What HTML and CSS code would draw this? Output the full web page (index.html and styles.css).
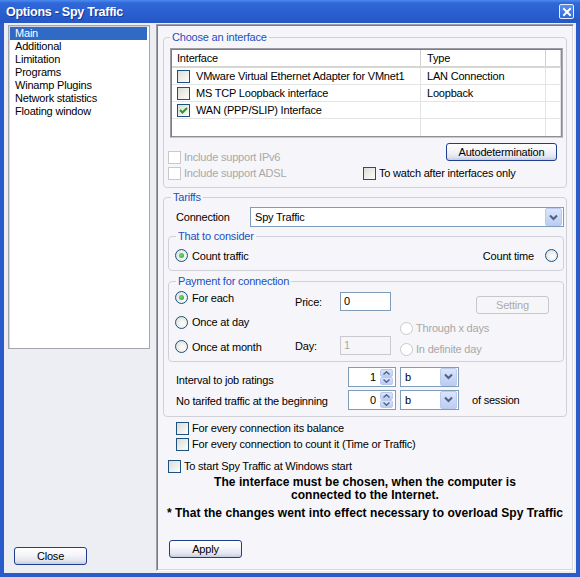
FILE: index.html
```html
<!DOCTYPE html>
<html>
<head>
<meta charset="utf-8">
<title>Options - Spy Traffic</title>
<link rel="stylesheet" href="styles.css">
</head>
<body>
<div class="window">
  <div class="titlebar">
    <span class="title">Options - Spy Traffic</span>
    <span class="close-x"><svg width="12" height="12" viewBox="0 0 12 12"><path d="M3 3 L9 9 M9 3 L3 9" stroke="#fff" stroke-width="2" stroke-linecap="square"/></svg></span>
  </div>
  <div class="client">
    <div class="sidebar">
      <ul class="listbox">
        <li class="sel">Main</li>
        <li>Additional</li>
        <li>Limitation</li>
        <li>Programs</li>
        <li>Winamp Plugins</li>
        <li>Network statistics</li>
        <li>Floating window</li>
      </ul>
      <button class="btn btn-close">Close</button>
    </div>
    <div class="panel">
      <fieldset class="group g-iface">
        <legend>Choose an interface</legend>
        <div class="listview">
          <div class="lv-row lv-head"><div class="c1">Interface</div><div class="c2">Type</div><div class="c3"></div></div>
          <div class="lv-row"><div class="c1"><span class="cb"></span>VMware Virtual Ethernet Adapter for VMnet1</div><div class="c2">LAN Connection</div><div class="c3"></div></div>
          <div class="lv-row"><div class="c1"><span class="cb"></span>MS TCP Loopback interface</div><div class="c2">Loopback</div><div class="c3"></div></div>
          <div class="lv-row"><div class="c1"><span class="cb checked"><svg width="11" height="11" viewBox="0 0 11 11"><path d="M2 5 L4.5 7.5 L9 3" fill="none" stroke="#21A121" stroke-width="2"/></svg></span>WAN (PPP/SLIP) Interface</div><div class="c2"></div><div class="c3"></div></div>
          <div class="lv-row lv-last"><div class="c1"></div><div class="c2"></div><div class="c3"></div></div>
        </div>
        <div class="iface-opts">
          <div class="opts-left">
            <div class="chk disabled"><span class="cb"></span>Include support IPv6</div>
            <div class="chk disabled"><span class="cb"></span>Include support ADSL</div>
          </div>
          <div class="opts-right">
            <button class="btn btn-auto">Autodetermination</button>
            <div class="chk"><span class="cb"></span>To watch after interfaces only</div>
          </div>
        </div>
      </fieldset>

      <fieldset class="group g-tariffs">
        <legend>Tariffs</legend>
        <div class="conn-row">
          <span class="conn-label">Connection</span>
          <div class="combo combo-conn"><span class="val">Spy Traffic</span><span class="arrow"><svg width="9" height="7" viewBox="0 0 9 7"><path d="M1 1.5 L4.5 5 L8 1.5" fill="none" stroke="#4D6185" stroke-width="2"/></svg></span></div>
        </div>
        <fieldset class="group sub g-consider">
          <legend>That to consider</legend>
          <div class="consider-row">
            <div class="rad"><span class="rb on"></span>Count traffic</div>
            <div class="rad rad-right">Count time<span class="rb"></span></div>
          </div>
        </fieldset>
        <fieldset class="group sub g-pay">
          <legend>Payment for connection</legend>
          <div class="pay">
            <div class="pay-a">
              <div class="rad"><span class="rb on"></span>For each</div>
              <div class="rad"><span class="rb"></span>Once at day</div>
              <div class="rad"><span class="rb"></span>Once at month</div>
            </div>
            <div class="pay-b">
              <div class="field"><span class="flabel">Price:</span><span class="edit">0</span></div>
              <div class="field"><span class="flabel">Day:</span><span class="edit disabled">1</span></div>
            </div>
            <div class="pay-c">
              <button class="btn btn-setting" disabled>Setting</button>
              <div class="rad disabled r-through"><span class="rb"></span>Through x days</div>
              <div class="rad disabled r-def"><span class="rb"></span>In definite day</div>
            </div>
          </div>
        </fieldset>
        <div class="int-row r1">
          <span class="int-label">Interval to job ratings</span>
          <div class="spin"><span class="spin-val">1</span><span class="spin-btns"><span class="sb"><svg width="7" height="4" viewBox="0 0 7 4"><path d="M0.5 3.5 L3.5 0.8 L6.5 3.5" fill="none" stroke="#4D6185" stroke-width="1.4"/></svg></span><span class="sb"><svg width="7" height="4" viewBox="0 0 7 4"><path d="M0.5 0.5 L3.5 3.2 L6.5 0.5" fill="none" stroke="#4D6185" stroke-width="1.4"/></svg></span></span></div>
          <div class="combo combo-unit"><span class="val">b</span><span class="arrow"><svg width="9" height="7" viewBox="0 0 9 7"><path d="M1 1.5 L4.5 5 L8 1.5" fill="none" stroke="#4D6185" stroke-width="2"/></svg></span></div>
        </div>
        <div class="int-row r2">
          <span class="int-label">No tarifed traffic at the beginning</span>
          <div class="spin"><span class="spin-val">0</span><span class="spin-btns"><span class="sb"><svg width="7" height="4" viewBox="0 0 7 4"><path d="M0.5 3.5 L3.5 0.8 L6.5 3.5" fill="none" stroke="#4D6185" stroke-width="1.4"/></svg></span><span class="sb"><svg width="7" height="4" viewBox="0 0 7 4"><path d="M0.5 0.5 L3.5 3.2 L6.5 0.5" fill="none" stroke="#4D6185" stroke-width="1.4"/></svg></span></span></div>
          <div class="combo combo-unit"><span class="val">b</span><span class="arrow"><svg width="9" height="7" viewBox="0 0 9 7"><path d="M1 1.5 L4.5 5 L8 1.5" fill="none" stroke="#4D6185" stroke-width="2"/></svg></span></div>
          <span class="of-session">of session</span>
        </div>
      </fieldset>

      <div class="chk c-bal"><span class="cb"></span>For every connection its balance</div>
      <div class="chk c-count"><span class="cb"></span>For every connection to count it (Time or Traffic)</div>
      <div class="chk c-start"><span class="cb"></span>To start Spy Traffic at Windows start</div>
      <p class="note">The interface must be chosen, when the computer is<br>connected to the Internet.</p>
      <p class="note note2">* That the changes went into effect necessary to overload Spy Traffic</p>
      <button class="btn btn-apply">Apply</button>
    </div>
  </div>
</div>
</body>
</html>
```

FILE: styles.css
```css
* { box-sizing: border-box; }
html, body { margin: 0; padding: 0; }
body {
  font-family: "Liberation Sans", Arial, sans-serif;
  font-size: 11px;
  letter-spacing: -0.2px;
  color: #000;
  background: #fff;
}

.window {
  width: 580px;
  height: 577px;
  background: #2A5BCB;
  display: flex;
  flex-direction: column;
}

.titlebar {
  height: 23px;
  flex: none;
  display: flex;
  align-items: center;
  justify-content: space-between;
  padding: 0 6px 0 6px;
  background: linear-gradient(#4C8AF0 0, #3068D8 3px, #2B60D0 50%, #2557C6 100%);
}
.title {
  color: #fff;
  font-weight: bold;
  font-size: 12.5px;
  letter-spacing: -0.25px;
  text-shadow: 1px 1px 0 #15389A;
}
.close-x {
  width: 15px;
  height: 15px;
  border: 1px solid #E6EEFF;
  border-radius: 2px;
  background: linear-gradient(#5A8FF0, #2F68DA);
  display: flex;
  align-items: center;
  justify-content: center;
}

.client {
  flex: 1;
  margin: 0 4px 4px;
  background: #EDEDF4;
  display: flex;
}

/* sidebar */
.sidebar {
  width: 146px;
  padding: 2px 0 8px 4px;
  margin-right: 6px;
  display: flex;
  flex-direction: column;
}
.listbox {
  list-style: none;
  margin: 0;
  height: 324px;
  background: #fff;
  border: 1px solid #A5A5AD;
  box-shadow: inset 1px 1px 0 #D4D4DC;
  padding: 1px;
}
.listbox li {
  height: 13px;
  line-height: 13px;
  padding-left: 5px;
  margin-right: 1px;
}
.listbox li.sel {
  background: #316AC5;
  color: #fff;
}
.btn-close {
  margin-top: auto;
  margin-left: 6px;
  width: 73px;
}

/* buttons */
.btn {
  font: inherit;
  letter-spacing: inherit;
  height: 18px;
  padding: 0;
  color: #000;
  border: 1px solid #1F3E8E;
  border-radius: 3px;
  background: linear-gradient(#FFFFFF 0%, #F6F6F9 40%, #E2E5F0 80%, #C4CBE0 100%);
}
.btn[disabled] {
  color: #ABABAB;
  border-color: #C8C8CC;
  background: #F6F6F9;
}

/* panel */
.panel {
  margin-top: 1px;
  width: 418px;
  height: 547px;
  background: #F6F6FA;
  border: 1px solid #9E9EA6;
  border-right-color: #FFFFFF;
  border-bottom-color: #FFFFFF;
  box-shadow: inset 1px 1px 0 #7A7A82, inset -1px -1px 0 #D6D6DC;
  padding: 6px 6px 0 6px;
  display: flex;
  flex-direction: column;
  align-items: stretch;
}

/* group boxes */
.group {
  margin: 0;
  border: 1px solid #D0D0D8;
  border-radius: 4px;
  min-width: 0;
}
.group legend {
  color: #2150BF;
  line-height: 13px;
  height: 13px;
  padding: 0 2px;
}
.g-iface { padding: 4px 3px 7px 4px; }
.g-iface legend { margin-left: 2px; }

.listview {
  margin-left: 2px;
  height: 90px;
  background: #fff;
  border: 1px solid #9C9CA4;
  border-right-color: #A8A8B0;
  border-bottom-color: #C8C8D0;
  box-shadow: inset 1px 1px 0 #7C7C84, inset -1px -1px 0 #8E8E96;
  padding: 1px;
  overflow: hidden;
}
.lv-row {
  display: flex;
  height: 17px;
  border-bottom: 1px solid #E4E4E4;
}
.lv-row > div {
  display: flex;
  align-items: center;
  white-space: nowrap;
  border-right: 1px solid #E4E4E4;
}
.lv-head { height: 18px; border-bottom: 2px solid #D6D6D2; }
.lv-head > div { border-right-color: #D0D0D0; }
.lv-last { border-bottom: none; }
.c1 { width: 249px; padding-left: 5px; }
.c2 { width: 125px; padding-left: 6px; }
.c3 { flex: 1; }
.c1 .cb { margin-right: 6px; }

/* checkboxes */
.cb {
  flex: none;
  width: 13px;
  height: 13px;
  border: 1px solid #1C5180;
  background: linear-gradient(135deg, #DCDCD7 0%, #F6F6F4 80%, #FFFFFF 100%);
  display: inline-flex;
  align-items: center;
  justify-content: center;
}
.chk {
  display: flex;
  align-items: center;
  height: 13px;
  line-height: 13px;
  white-space: nowrap;
}
.chk .cb { margin-right: 3px; }
.chk.disabled { color: #A8A8A8; }
.chk.disabled .cb { border-color: #CAC8C8; background: #fff; }

.iface-opts { display: flex; }
.opts-left {
  width: 195px;
  padding-top: 13px;
  display: flex;
  flex-direction: column;
  gap: 3px;
}
.opts-right {
  display: flex;
  flex-direction: column;
  align-items: flex-start;
}
.btn-auto { width: 111px; margin-left: 83px; margin-top: 5px; }
.opts-right .chk { margin-top: 6px; }

/* tariffs */
.g-tariffs { margin-top: 3px; padding: 3px 2px 6px 4px; }
.g-tariffs legend { margin-left: 3px; }
.conn-row { display: flex; align-items: center; height: 20px; }
.conn-label { width: 74px; margin-left: 8px; }
.combo {
  height: 20px;
  border: 1px solid #7F9DB9;
  background: #fff;
  display: flex;
  align-items: center;
  padding: 1px;
}
.combo .val { flex: 1; padding-left: 3px; }
.combo .arrow {
  width: 17px;
  height: 18px;
  border: 1px solid #BACBEF;
  border-radius: 2px;
  background: linear-gradient(#DAE4FB, #BCCDF3);
  display: flex;
  align-items: center;
  justify-content: center;
}
.combo-conn { flex: 1; }

.sub { padding-left: 6px; padding-right: 5px; }
.sub legend { margin-left: 1px; }
.g-consider { margin-top: 3px; padding-top: 6px; padding-bottom: 8px; }
.consider-row { display: flex; justify-content: space-between; }
.rad {
  display: flex;
  align-items: center;
  height: 13px;
  white-space: nowrap;
}
.rb {
  flex: none;
  width: 13px;
  height: 13px;
  border-radius: 50%;
  border: 1px solid #1C5180;
  background: radial-gradient(circle at 60% 60%, #FFFFFF 0%, #E8E8E4 60%, #D2D2CC 100%);
  margin-right: 4px;
  display: inline-flex;
  align-items: center;
  justify-content: center;
}
.rb.on::after {
  content: "";
  width: 5px;
  height: 5px;
  border-radius: 50%;
  background: radial-gradient(circle at 40% 40%, #6EE06E, #21A121);
}
.rad-right .rb { margin-right: 0; margin-left: 11px; }
.rad.disabled { color: #A8A8A8; }
.rad.disabled .rb { border-color: #CAC8C8; background: #fff; margin-right: 3px; }

.g-pay { margin-top: 4px; padding-top: 3px; padding-bottom: 5px; }
.pay { display: flex; }
.pay-a {
  width: 120px;
  display: flex;
  flex-direction: column;
  gap: 11.5px;
}
.pay-b {
  width: 96px;
  padding-top: 1px;
  display: flex;
  flex-direction: column;
  gap: 25px;
}
.field { display: flex; align-items: center; height: 19px; }
.flabel { width: 45px; }
.edit {
  width: 51px;
  height: 19px;
  border: 1px solid #7F9DB9;
  background: #fff;
  padding-left: 3px;
  line-height: 17px;
}
.edit.disabled { border-color: #C9C9CF; color: #A8A8A8; background: #F6F6FA; }
.pay-c {
  margin-left: 9px;
  width: 149px;
  padding-top: 5px;
  display: flex;
  flex-direction: column;
}
.btn-setting { width: 73px; align-self: flex-end; }
.r-through { margin-top: 7.5px; }
.r-def { margin-top: 8px; }

.int-row { display: flex; align-items: center; height: 20px; }
.int-row.r1 { margin-top: 5px; }
.int-row.r2 { margin-top: 3px; }
.int-label { width: 172px; margin-left: 8px; padding-top: 6px; }
.r2 .int-label { padding-top: 2px; }
.spin { display: flex; height: 20px; width: 48px; }
.spin-val {
  width: 31px;
  height: 20px;
  border: 1px solid #7F9DB9;
  border-right: none;
  background: #fff;
  text-align: right;
  padding-right: 3px;
  line-height: 18px;
}
.spin-btns {
  width: 17px;
  height: 20px;
  border: 1px solid #7F9DB9;
  border-left: none;
  background: #fff;
  padding: 1px 2px 1px 1px;
  display: flex;
  flex-direction: column;
}
.sb {
  flex: 1;
  border: 1px solid #BACBEF;
  border-radius: 2px;
  background: linear-gradient(#DAE4FB, #BCCDF3);
  display: flex;
  align-items: center;
  justify-content: center;
}
.combo-unit { width: 59px; margin-left: 4px; }
.of-session { margin-left: 13px; }

/* bottom area */
.c-bal { margin-top: 5px; margin-left: 13px; }
.c-count { margin-top: 3px; margin-left: 13px; }
.c-start { margin-top: 9px; margin-left: 5px; }
.note {
  margin: 3.5px 0 0;
  text-align: center;
  font-weight: bold;
  font-size: 12px;
  line-height: 13px;
  letter-spacing: 0.05px;
}
.note2 { margin-top: 5px; }
.btn-apply { width: 73px; margin-top: 19.5px; margin-left: 6px; align-self: flex-start; }
```
